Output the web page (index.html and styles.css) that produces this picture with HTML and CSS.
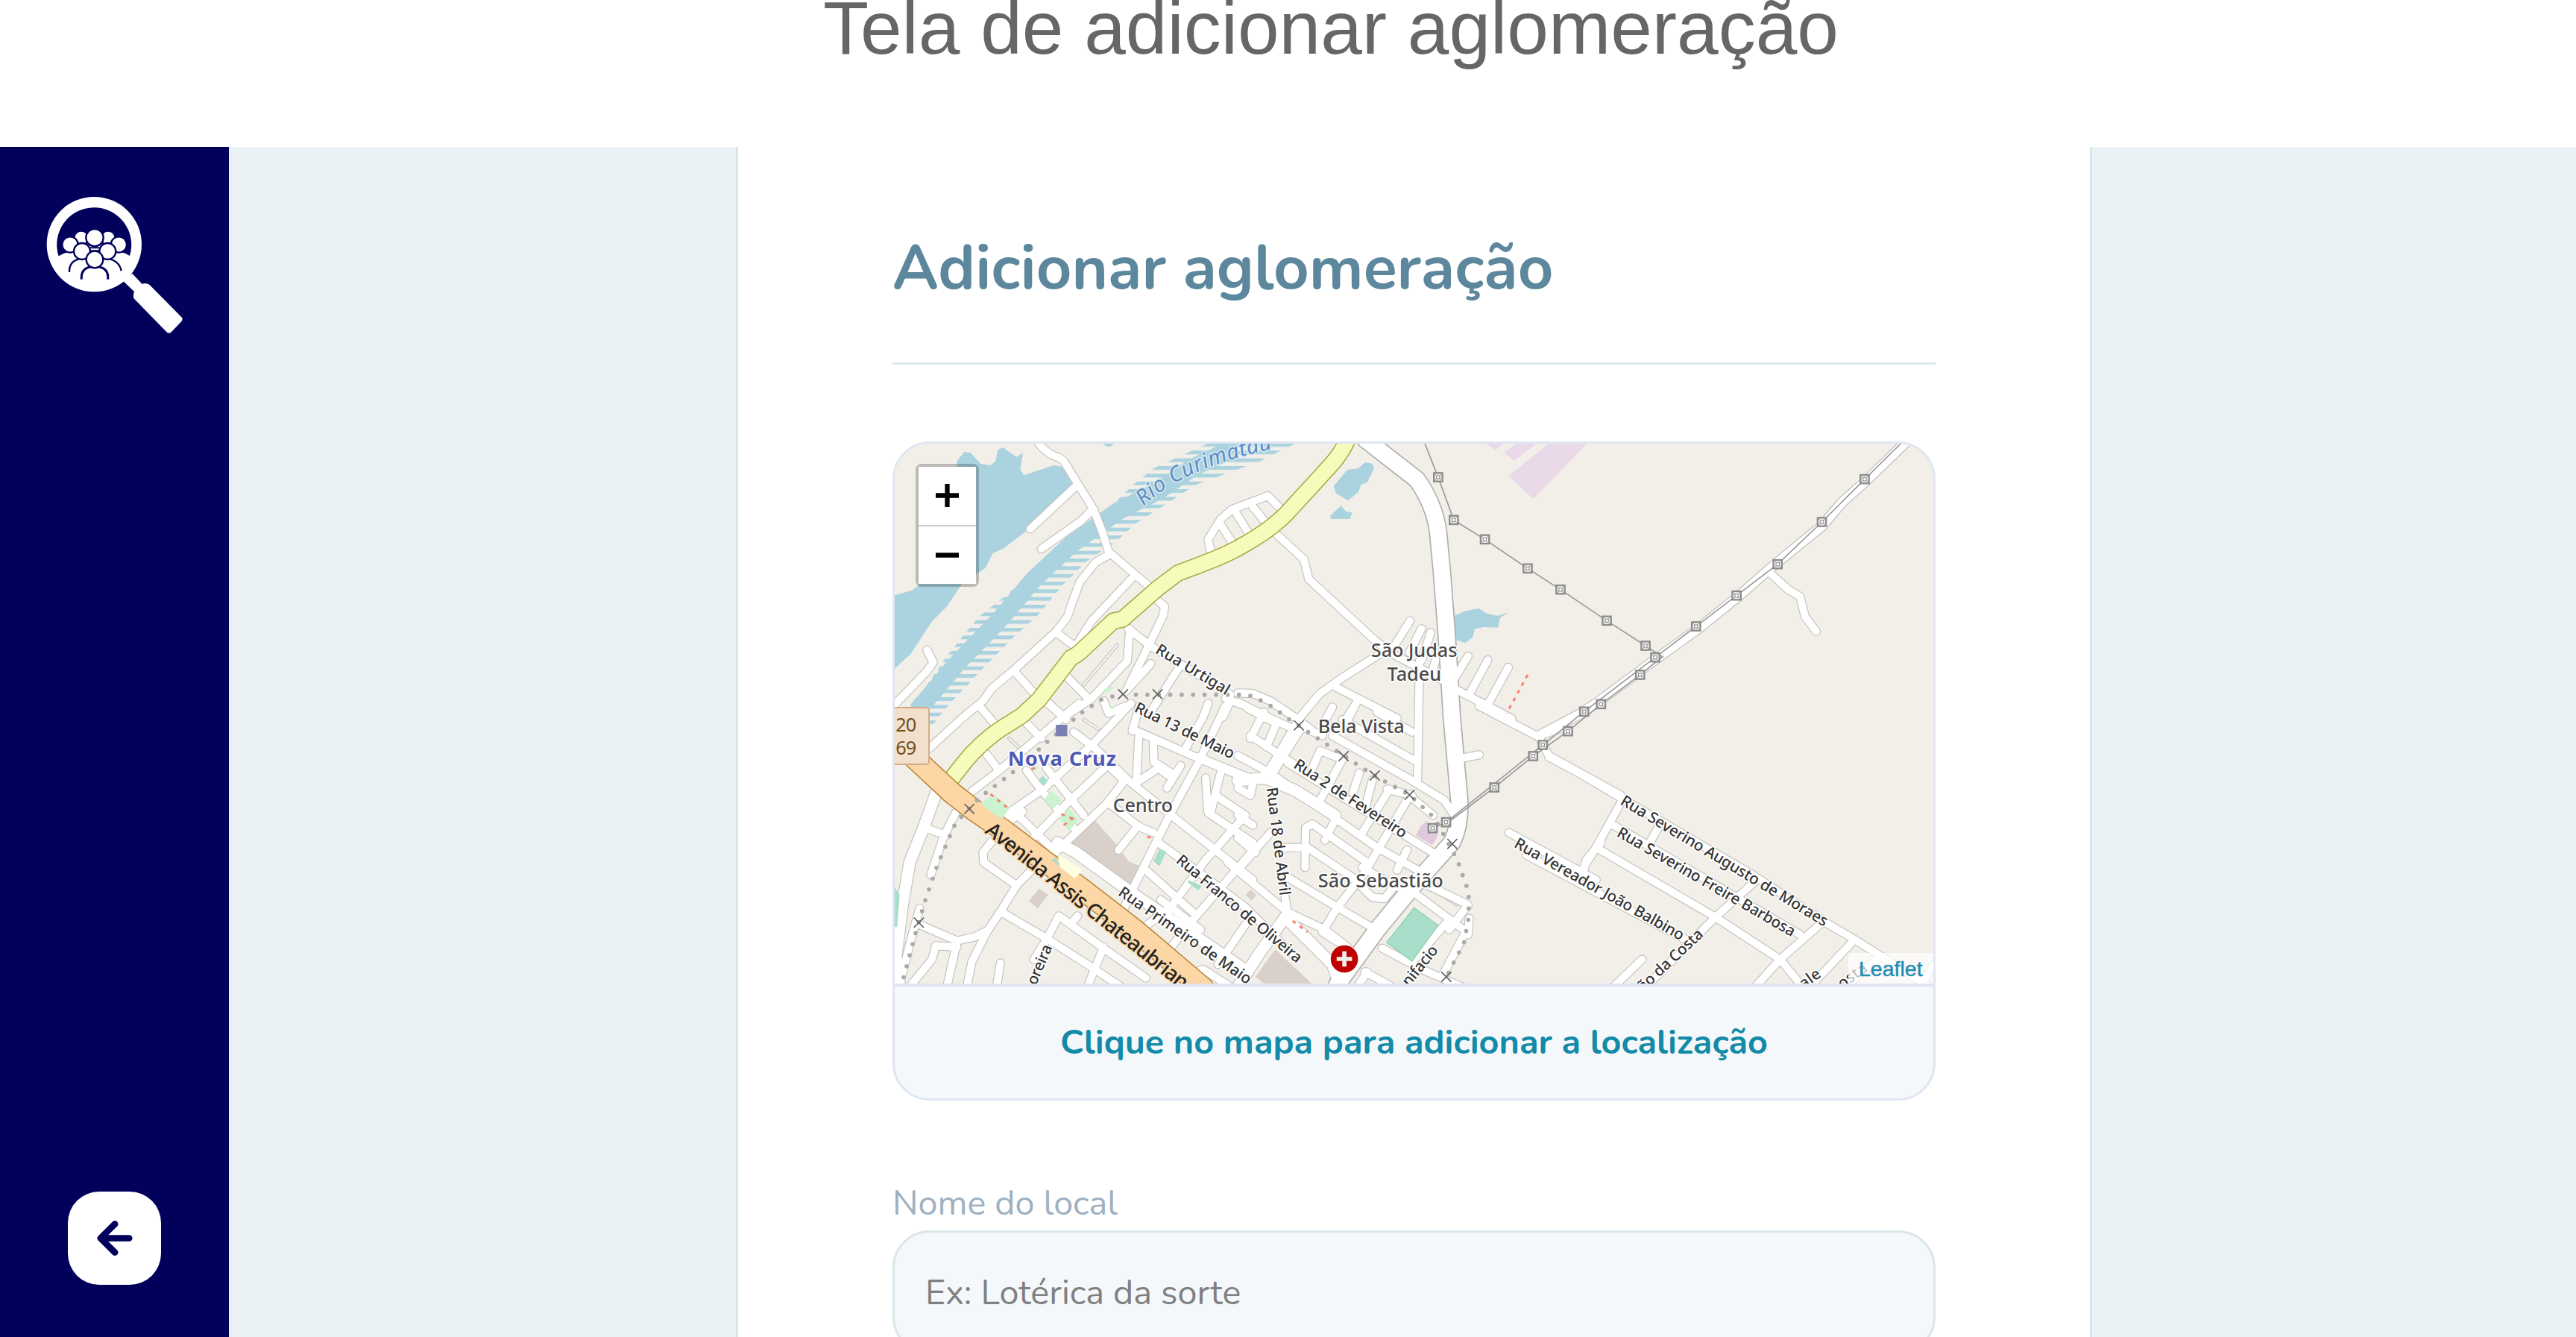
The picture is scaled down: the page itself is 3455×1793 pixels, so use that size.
FILE: index.html
```html
<!DOCTYPE html>
<html lang="pt-BR">
<head>
<meta charset="utf-8">
<title>Adicionar aglomeração</title>
<link rel="stylesheet" href="styles.css">
</head>
<body>
<h1 class="caption">Tela de adicionar aglomeração</h1>
<div class="app">
  <aside class="sidebar">
    <svg class="logo" viewBox="186 220 549 550" aria-label="Logo">
      <path fill="#fff" fill-rule="evenodd" d="M379 222a191 191 0 1 1 0 382a191 191 0 1 1 0-382ZM236 461Q260 445 283 443L480 443Q505 446 522 459A150 150 0 1 0 236 461Z"/>
      <path fill="#fff" d="M532 530L572 573Q586 566 602 576L733 709Q735 716 731 722L688 767Q680 772 672 767L540 632Q533 624 540 603L495 560Z"/>
      <path fill="#01015b" d="M236 461Q260 445 283 443L480 443Q505 446 522 459L490 400H260Z"/>
      <path fill="#fff" d="M234 462Q256 446 283 446L480 446Q505 448 524 462V530H234ZM310 405H450V450H310Z"/>
      <g fill="#fff" stroke="#01015b" stroke-width="7">
        <circle cx="327" cy="388" r="29"/><circle cx="435" cy="388" r="29"/>
        <circle cx="282" cy="414" r="32"/><circle cx="478" cy="414" r="32"/>
        <circle cx="381" cy="386" r="35"/>
        <path d="M279 525Q277 478 328 470Q375 468 381 500Q390 468 432 470Q480 478 488 520"/>
        <circle cx="330" cy="441" r="33"/><circle cx="433" cy="441" r="33"/>
        <path stroke-width="9" d="M328 554Q325 512 362 504H400Q438 512 434 554"/>
        <circle cx="381" cy="474" r="34"/>
      </g>
      <path d="M362 427H400M360 439H402" stroke="#01015b" stroke-width="6"/>
      <path fill="#fff" d="M284 526L324 556L340 575H420L438 556L484 524L500 545L440 590L379 597L310 590L270 550Z"/>
    </svg>
    <button class="back" aria-label="Voltar">
      <svg viewBox="92 84 374 374"><path d="M338 271H224M281 214L223 271L281 328" fill="none" stroke="#01015b" stroke-width="26" stroke-linecap="round" stroke-linejoin="round"/></svg>
    </button>
  </aside>
  <main class="main">
    <form class="panel">
      <h2 class="title"><span>Adicionar aglomeração</span></h2>
      <section class="map-card">
        <div class="map">
          <svg class="tiles" viewBox="30 45 4176 2172" preserveAspectRatio="none">
            <defs>
              <pattern id="flood" x="0" y="42" width="60" height="31" patternUnits="userSpaceOnUse"><rect width="60" height="15" fill="#aad3df"/></pattern>
              <g id="tower"><rect x="-17" y="-17" width="34" height="34" fill="#f4f3ef" stroke="#8b8b8b" stroke-width="7"/><path d="M-14-14L14 14M14-14L-14 14" stroke="#a5a5a5" stroke-width="3"/><circle r="7" fill="#fff" stroke="#8b8b8b" stroke-width="3"/></g>
              <path id="cross" d="M-20-20L20 20M20-20L-20 20"/>
              <g id="streets">
                <path d="M600 30Q640 90 690 100L710 115L765 205L830 310L865 400L890 480L1060 625M765 210L575 388M825 310L780 355L620 468M895 490L840 520L775 600L745 680L725 740L680 800L510 955L420 1030L385 1080L300 1150L170 1270M990 580L820 760L755 865M680 805L760 865M160 875L185 925L160 960L30 1095M515 965L595 1055M720 980L810 1072M1092 680L1115 700L1110 735L1055 850L970 1020M975 790L965 920L820 1072L710 1145M970 790L1060 860L1210 950L1380 1055M1170 950L1065 1115M1060 930L960 1040M640 1085L710 1145M1300 475L1290 430L1340 350L1385 310L1530 255L1575 300M1340 370L1395 455M1400 320L1450 400M1470 300L1520 360M1290 1090L1270 1145L1200 1270M1380 1080L1350 1145M1360 1070L1440 1100L1520 1150M870 1080L890 1130L960 1100"/>
                <g transform="translate(1410 0)"><path d="M140 395L265 510L285 590L555 840L620 890L830 1000M580 885L430 980L330 1050L250 1145L130 1350M395 1025L640 1150M692 758L615 880M738 790L690 885M775 805L740 915M730 920L722 1400M795 915L780 970M870 1030L1100 1150M925 900L865 1000M1005 915L935 1045M1087 945L1010 1085M380 1105L350 1160M475 1090L430 1160M0 1048L60 1050L130 1080L220 1140L300 1200M0 1085L130 1150L240 1200"/></g>
                <g transform="translate(0 1110)"><path d="M150 480L235 510M275 420L225 520L175 670M420 535L385 580L388 620L520 712M640 590L520 712L460 810L400 900L340 1020L320 1120M400 895L350 920L280 935L130 870M130 805L95 930L50 1110M280 940L240 1120M280 960L195 955L180 1010L90 1120M455 1025L440 1120M460 820L640 925L820 1040L940 1120M640 930L590 1010M640 930L690 835L870 965L1040 1085M765 835L740 865M870 960L805 1120M340 335L450 250L700 40L770-20M400 185L450 250M370-10L460 95M545 45L620 120M650-20L720 45M460 440L620 330L830 140L980-20M750 95L830 155L970 290L1130 420L1300 555L1470 690M520 425L665 565M560 250L620 330L750 480M640 240L790 430M590 520L720 385L900 215M665 590L880 385L955 290M880 220L950 290M545 415L470 470M1010 470L930 570M890 380L1010 475L1070 500M1000 90L1250 200L1440 280M985 90L1015-10M1012 100L1002 290M1070 140L1072 215L1150 265M1180 230L1125 320M1000 300L1090 240L1130 270M1360-10L1250 220L1130 440L1050 600L970 760L935 850M1250 195L1480 290M1280 280L1290 420L1470 540M1340 260L1300 420M1320 350L1440 430L1280 610L1140 800L1000 905M1090 540L1200 620L1440 800L1640 1000M1040 650L1240 830M1480 560L1230 850L1110 1000M1100 770L1260 890M1440 870L1330 1030M1220 1110L1220 1070L1270 1050L1380 1120"/></g>
                <g transform="translate(1410 1110)"><path d="M50 120L105 15M50 110L220 220M40 0L155 60L115 155M260 70L125 285M270 80L340 110M200 220L800 590M0 190L130 260L230 330L560 560L740 660M380 110L700 290L830 370L870 430M420 45L710 210M560 15L700 95M480-30L440 50M330 170L420 205L330 370M330 170L300 240M488 260L462 340M540 290L515 390M610 325L500 500M600 325L700 350M680 370L510 660L400 800L340 900M700 360L785 430M270 640L272 480L300 465L520 620M170 560L280 560L460 680L540 760L590 765L640 700M680 570L640 650M500 640L640 720M390 450L350 530M0 650L130 500M0 520L70 580M0 430L60 470M-40 620L200 820L350 890L440 960M200 680L400 800L570 900M190 760L200 830M340 900L480 990M720 750L920 900M740 700L925 790L850 890M920 890L820 1080M580 965L740 1050L900 1120M700 1020L850 850M510 1060L620 1120M480 1120L520 1060M930 845L925 910M900 200L970 187M970-10L1210 115L1250 190L1540 350M1210 110L1300 80M1090 500L1440 690M1460 540L1400 610L1390 660M0 320L50 350L60 300"/></g>
                <g transform="translate(2790 1110)"><path d="M-130 195L0 265L160 360L690 670L980 860L1100 930L1400 1120M165 370L60 560L10 640M130 470L880 910M310 480L270 550M60 560L540 840L800 1010L890 1120M-220 590L420 930M700 695L540 840L260 1120M970 860L800 1010L700 1120M1090 940L920 1120M1190 1010L1060 1120M1440 1000L1360 1120M245 1010L130 1120"/></g>
                <path d="M3550 565L3620 630L3670 660L3690 740L3735 800"/>
              </g>
              <g id="wide"><path d="M200 1440L150 1580L90 1730L60 1910L35 2110L50 2230M685 1650L760 1690L980 1850L1450 2170M1600 1950L1500 2090L1410 2230M1410 1400L1520 1390L1640 1440L1800 1540M1610 1960L1790 2140L1820 2230"/></g>
              <path id="main-road" d="M1925 30L2130 190Q2200 290 2215 400L2230 560L2250 820L2270 1145L2300 1480Q2305 1580 2270 1650L2110 1830L1970 2000L1810 2220"/>
              <path id="country" d="M4100 35L3930 200L3840 280L3760 375L3570 530L3415 665L3260 790L3100 905L2850 1090L2780 1135L2620 1220"/>
              <path id="yellow" d="M1855 20Q1830 80 1780 135L1620 310Q1550 390 1410 465Q1350 500 1170 565L1090 625L945 752L910 758L800 860Q760 900 740 905L610 1075L540 1140L460 1190Q370 1250 300 1340L245 1410"/>
              <path id="orange" d="M110 1310L260 1450L350 1520L460 1595L600 1700L800 1850L1000 2005L1270 2235"/>
            </defs>
            <rect x="0" y="0" width="4300" height="2300" fill="#f2efe9"/>
            <g fill="#aad3df">
              <path d="M280 115L310 78L335 82L375 125L415 132L435 115L445 70L465 60L520 98L545 82L535 150L550 172L670 132L720 140L755 200L575 370L555 400L465 468L425 485L395 545L300 610L240 700L180 760L95 890L30 950V655L100 635L125 615L280 400ZM868 45H912Q890 70 868 45Z"/>
              <path d="M1795 215L1850 150L1895 145L1920 120L1950 125L1958 145L1930 200L1905 210L1895 240L1852 274L1805 245ZM1780 335L1825 295L1845 318L1870 322L1860 348L1785 348ZM2278 738L2325 718L2380 708L2410 728L2455 738L2500 722L2465 745L2455 785L2400 783L2362 790L2355 822L2325 847L2285 835Z"/>
              <path fill="url(#flood)" d="M1290 44L1070 145L990 210L860 335L700 460L590 550L490 645L370 740L295 830L240 900L150 1030L95 1090V1230L180 1180L230 1115L290 1050L380 955L500 830L600 740L710 610L800 520L930 430L1000 365L1150 270L1240 210L1420 145L1500 115L1640 44Z"/>
            </g>
            <path fill="none" stroke="#aad3df" stroke-width="72" stroke-linejoin="round" d="M120 1120L280 930L450 755L590 590L740 450L930 315L1090 235L1230 140L1380 70"/>
            <path fill="#ead9e8" d="M2410 44H2480L2445 72ZM2480 80L2530 44H2610L2520 115ZM2498 175L2660 44H2815L2598 267Z"/>
            <path fill="#d9d0c9" d="M732 1650L830 1555L920 1655L970 1725L1020 1745L980 1820ZM570 1885L610 1835L647 1860L605 1915ZM1480 2190L1560 2080L1710 2220H1520ZM1440 1860L1460 1840L1485 1860L1465 1885Z"/>
            <g fill="none" stroke-linejoin="round" stroke-linecap="round">
              <path d="M925 855L785 1020M790 1155L850 1195M490 1230L530 1270M2200 1840L2290 1900" stroke="#c6c3bf" stroke-width="14"/>
              <path d="M925 855L785 1020M790 1155L850 1195M490 1230L530 1270M2200 1840L2290 1900" stroke="#f8f7f4" stroke-width="7"/>
              <use href="#streets" stroke="#c4c2be" stroke-width="37"/>
              <use href="#country" stroke="#c4c2be" stroke-width="44"/>
              <use href="#wide" stroke="#c4c2be" stroke-width="52"/>
              <use href="#main-road" stroke="#b0afac" stroke-width="75"/>
              <use href="#streets" stroke="#fff" stroke-width="30"/>
              <use href="#country" stroke="#fff" stroke-width="36"/>
              <use href="#wide" stroke="#fff" stroke-width="45"/>
              <use href="#main-road" stroke="#fff" stroke-width="65"/>
              <use href="#yellow" stroke="#a3a83e" stroke-width="69"/>
              <use href="#yellow" stroke="#f6fabb" stroke-width="60"/>
              <use href="#orange" stroke="#b88435" stroke-width="91"/>
              <use href="#orange" stroke="#fcd6a4" stroke-width="82"/>
            </g>
            <path fill="#e0c9df" d="M2125 1620L2145 1585L2170 1562L2215 1610L2208 1635L2190 1660Z"/>
            <path fill="#ccf3cf" d="M375 1490L430 1455L495 1510L460 1555L400 1515ZM632 1475L660 1440L703 1480L665 1515ZM690 1550L730 1512L770 1560L730 1605ZM575 1345L595 1335L610 1350L590 1365ZM870 1035L900 1020L910 1030L875 1050ZM895 1100H920L905 1115Z"/>
            <path fill="#a9dfca" d="M608 1400L625 1380L645 1402L630 1423ZM1070 1725L1095 1675L1122 1685L1095 1745ZM1210 1800L1265 1825L1250 1842L1210 1812ZM660 1718L680 1710L695 1750ZM30 1830L50 1860L40 1990H30Z"/>
            <path fill="#feffe1" d="M685 1695L785 1760L755 1795L695 1750Z"/>
            <path fill="#a9dfca" stroke="#8fd0b5" stroke-width="4" d="M2118 1912L2215 1983L2110 2127L2008 2052Z"/>
            <path fill="none" stroke="#fa8072" stroke-width="9" stroke-dasharray="15 20" d="M2575 975L2490 1130M415 1455L490 1515M700 1535L760 1560M710 1580L750 1550M1045 1628H1070M580 1355L612 1340M1630 1965L1690 2010"/>
            <path fill="none" stroke="#aaa9a7" stroke-width="17" stroke-linecap="round" stroke-dasharray="0 46" d="M905 1062L860 1075L785 1125L660 1230L520 1355L370 1470L275 1570L200 1745L155 1875L115 2010L65 2195M1000 1055H1420L1470 1060L1550 1105L1625 1160L1655 1180L1835 1300L1958 1380L2100 1458L2200 1550L2290 1715L2338 1850V1950L2320 2050L2248 2190"/>
            <g fill="none" stroke="#626262" stroke-width="5">
              <use href="#cross" x="948" y="1053"/><use href="#cross" x="1087" y="1053"/><use href="#cross" x="330" y="1514"/><use href="#cross" x="127" y="1972"/><use href="#cross" x="1655" y="1178"/><use href="#cross" x="1835" y="1302"/><use href="#cross" x="1960" y="1380"/><use href="#cross" x="2100" y="1458"/><use href="#cross" x="2272" y="1655"/><use href="#cross" x="2248" y="2190"/>
            </g>
            <path fill="none" stroke="#999" stroke-width="5" d="M2160 40L2215 180L2278 352L2403 430L2575 547L2707 632L2893 757L3049 858L3120 905M4085 35L3930 188L3758 360L3580 530L3415 656L3252 780L3088 905L2802 1123L2636 1257L2247 1568L2193 1592M3120 900L3027 975L2870 1093L2737 1202L2597 1302L2441 1428L2247 1575"/>
            <g>
              <use href="#tower" x="2215" y="180"/><use href="#tower" x="2278" y="352"/><use href="#tower" x="2403" y="430"/><use href="#tower" x="2575" y="547"/><use href="#tower" x="2707" y="632"/><use href="#tower" x="2893" y="757"/><use href="#tower" x="3049" y="858"/><use href="#tower" x="3930" y="188"/><use href="#tower" x="3758" y="360"/><use href="#tower" x="3580" y="530"/><use href="#tower" x="3415" y="656"/><use href="#tower" x="3252" y="780"/><use href="#tower" x="3088" y="905"/><use href="#tower" x="3027" y="975"/><use href="#tower" x="2870" y="1093"/><use href="#tower" x="2802" y="1123"/><use href="#tower" x="2737" y="1202"/><use href="#tower" x="2636" y="1257"/><use href="#tower" x="2597" y="1302"/><use href="#tower" x="2441" y="1428"/><use href="#tower" x="2247" y="1568"/><use href="#tower" x="2193" y="1592"/>
            </g>
            <path id="rio" fill="none" d="M1030 297Q1190 140 1570 62"/>
            <text class="river"><textPath href="#rio" textLength="575">Rio Curimataú</textPath></text>
            <g class="street">
              <text transform="translate(1075 885) rotate(31)" textLength="335">Rua Urtigal</text>
              <text transform="translate(990 1122) rotate(26)" textLength="438">Rua 13 de Maio</text>
              <text transform="translate(1630 1346) rotate(33)" textLength="528">Rua 2 de Fevereiro</text>
              <text transform="translate(1525 1430) rotate(83)" textLength="438">Rua 18 de Abril</text>
              <text transform="translate(1158 1727) rotate(40)" textLength="638">Rua Franco de Oliveira</text>
              <text transform="translate(925 1859) rotate(34.8)" textLength="636">Rua Primeiro de Maio</text>
              <text transform="translate(598 2227) rotate(-67)" textLength="170">oreira</text>
              <text transform="translate(2098 2232) rotate(-51)" textLength="190">nifacio</text>
              <text transform="translate(2944 1494) rotate(31)" textLength="960">Rua Severino Augusto de Moraes</text>
              <text transform="translate(2930 1622) rotate(30)" textLength="816">Rua Severino Freire Barbosa</text>
              <text transform="translate(2517 1666) rotate(29.4)" textLength="772">Rua Vereador João Balbino</text>
              <text transform="translate(3040 2252) rotate(-43)" textLength="335">ão da Costa</text>
              <text transform="translate(3685 2240) rotate(-36)" textLength="90">ale</text>
              <text transform="translate(3840 2240) rotate(-36)" textLength="130">osta</text>
            </g>
            <text class="avenue" transform="translate(390 1608) rotate(38.7)" textLength="1018">Avenida Assis Chateaubrian</text>
            <g class="place">
              <text x="1945" y="902" textLength="347">São Judas</text>
              <text x="2010" y="1000" textLength="218">Tadeu</text>
              <text x="1732" y="1210" textLength="348">Bela Vista</text>
              <text x="1732" y="1829" textLength="504">São Sebastião</text>
              <text x="908" y="1526" textLength="240">Centro</text>
              <text class="town" x="485" y="1342" textLength="436">Nova Cruz</text>
            </g>
            <rect x="678" y="1176" width="46" height="46" fill="#7a80b1"/>
            <rect x="10" y="1107" width="158" height="228" rx="12" fill="#f3e0cc" stroke="#d5ab85" stroke-width="6"/>
            <g class="shield"><text x="34" y="1202" textLength="84">20</text><text x="34" y="1295" textLength="84">69</text></g>
            <circle cx="1838" cy="2118" r="55" fill="#bf0000"/>
            <path d="M1838 2087V2149M1807 2118H1869" stroke="#f2efe9" stroke-width="17"/>
          </svg>
          <div class="zoom">
            <a class="zoom-btn" aria-label="Aproximar"><svg viewBox="0 0 34 34"><path d="M17 1V33M1 17H33"/></svg></a>
            <a class="zoom-btn" aria-label="Afastar"><svg viewBox="0 0 34 34"><path d="M1 17H33"/></svg></a>
          </div>
          <div class="attribution">Leaflet</div>
        </div>
        <div class="hint"><span>Clique no mapa para adicionar a localização</span></div>
      </section>
      <label class="label" for="nome"><span>Nome do local</span></label>
      <input class="input" id="nome" placeholder="Ex: Lotérica da sorte">
    </form>
  </main>
</div>
</body>
</html>
```
FILE: styles.css
```css
* { box-sizing: border-box; }
html, body { height: 100%; }
body { margin: 0; height: 1793px; overflow: hidden; background: #fff; font-family: "Nunito", "Noto Sans", sans-serif; }
.caption { margin: 0; height: 197px; padding-left: 1104px; font: 400 100px/75px "Liberation Sans", Arial, sans-serif; color: #666; white-space: nowrap; }
.app { display: flex; height: 1596px; overflow: hidden; background: #e9f1f4; }
.sidebar { width: 307px; height: 1596px; background: #01015b; display: flex; flex-direction: column; justify-content: space-between; align-items: center; padding: 66px 0 70px; }
.logo { width: 183px; height: 184px; }
.back { width: 125px; height: 125px; padding: 0; border: 0; border-radius: 42px; background: #fff; }
.back svg { display: block; width: 100%; height: 100%; }
.main { flex: 1; padding-left: 680px; }
.panel { width: 1819px; height: 1800px; padding: 0 207px; background: #fff; border: solid #d8e5ea; border-width: 0 3px; }
.title { margin: 0; height: 292px; padding-top: 106px; border-bottom: 3px solid #dbe8ec; font-size: 83px; line-height: 114px; font-weight: 700; color: #5c879d; white-space: nowrap; }
.map-card { margin-top: 103px; height: 884px; border: 3px solid #dfe6f2; border-radius: 50px; overflow: hidden; background: #f4f8fb; }
.map { position: relative; height: 724px; }
.tiles { display: block; width: 100%; height: 100%; }
.river, .street, .place, .avenue, .shield { font-family: "Noto Sans", sans-serif; paint-order: stroke; stroke-linejoin: round; stroke: #fff; stroke-width: 10px; }
.river { font-size: 86px; font-style: italic; fill: #5c8cc6; stroke: #d7e8ee; }
.street { font-size: 62px; font-weight: 500; fill: #333; }
.avenue { font-size: 83px; font-weight: 500; fill: #222; stroke: #fcd6a4; }
.place { font-size: 76px; font-weight: 500; fill: #4a4a4a; }
.place .town { font-size: 82px; font-weight: 700; fill: #5059b4; }
.shield { font-size: 76px; fill: #70501f; stroke: none; }
.zoom { position: absolute; left: 28px; top: 27px; width: 85px; height: 165px; border: 4px solid rgba(0, 0, 0, .22); border-radius: 8px; background-clip: padding-box; display: flex; flex-direction: column; }
.zoom-btn { flex: 1; display: flex; align-items: center; justify-content: center; background: #fff; border-bottom: 2px solid #ccc; }
.zoom-btn:last-child { border: 0; }
.zoom-btn svg { width: 33px; height: 33px; stroke: #000; stroke-width: 6.5; }
.attribution { position: absolute; right: 0; bottom: 0; width: 114px; height: 41px; padding-left: 14px; background: rgba(255, 255, 255, .7); font: 28.5px/42px "Liberation Sans", Arial, sans-serif; color: #1f8db5; -webkit-text-stroke: .5px; }
.hint { height: 154px; border-top: 4px solid #dfe6f2; display: flex; align-items: center; justify-content: center; font-size: 46.8px; line-height: 60px; font-weight: 700; color: #128aa8; white-space: nowrap; }
.label { display: block; margin-top: 104px; height: 70px; font-size: 46.7px; line-height: 68px; color: #9db1c1; white-space: nowrap; }
.input { display: block; width: 100%; height: 166px; padding: 0 41px; border: 3px solid #d9e6ea; border-radius: 50px; background: #f4f8fb; font: 46.7px "Nunito", "Noto Sans", sans-serif; color: #333; }
.input::placeholder { color: #808080; opacity: 1; }
```
